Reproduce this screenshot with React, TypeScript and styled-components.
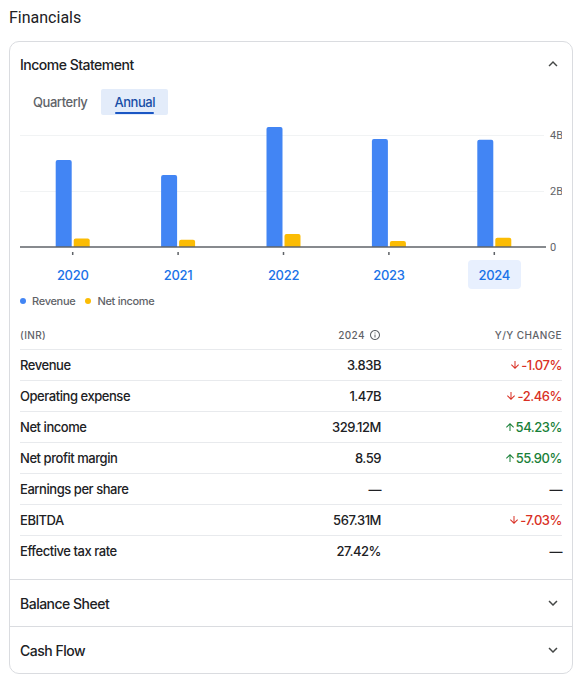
import React from "react";
import styled, { createGlobalStyle } from "styled-components";

const GlobalStyle = createGlobalStyle`
  body {
    margin: 0;
    background: #fff;
    color: #202124;
    font-family: Roboto, "Noto Sans", Arial, sans-serif;
  }
`;

// medium weight text: Inter carries a real 500 face
const MEDIUM = `Inter, Roboto, Arial, sans-serif`;

const Page = styled.div`
  padding: 8px 5px 0 9px;
`;

const Title = styled.h2`
  margin: 0;
  font-size: 16px;
  line-height: 20px;
  font-weight: 400;
  color: #202124;
`;

const Card = styled.section`
  margin-top: 13px;
  width: 564px;
  box-sizing: border-box;
  border: 1px solid #dadce0;
  border-radius: 10px;
  overflow: hidden;
`;

const Section = styled.div<{ $divided?: boolean }>`
  padding: 0 10px;
  border-top: ${({ $divided }) => ($divided ? "1px solid #dadce0" : "none")};
`;

const SectionHeader = styled.div<{ $height: number }>`
  height: ${({ $height }) => $height}px;
  display: flex;
  align-items: center;
  justify-content: space-between;
  font-family: ${MEDIUM};
  font-size: 14px;
  font-weight: 500;
  letter-spacing: -0.5px;
  color: #202124;
`;

const Chevron = styled.svg`
  width: 18px;
  height: 18px;
  fill: #444746;
`;

const Tabs = styled.div`
  margin-top: 3px;
  display: flex;
  gap: 1px;
`;

const Tab = styled.button<{ $active?: boolean }>`
  position: relative;
  height: 26px;
  padding: 0 13px;
  border: none;
  border-radius: 2px;
  background: ${({ $active }) => ($active ? "#e3ecfa" : "transparent")};
  color: ${({ $active }) => ($active ? "#174ea6" : "#5f6368")};
  font-family: ${MEDIUM};
  font-size: 13px;
  font-weight: 500;
  letter-spacing: -0.45px;
  cursor: pointer;

  &::after {
    content: "";
    display: ${({ $active }) => ($active ? "block" : "none")};
    position: absolute;
    left: 14px;
    right: 14px;
    bottom: 1px;
    height: 2px;
    background: #1a56c4;
    border-radius: 1px;
  }
`;

const ChartSvg = styled.svg`
  display: block;
  margin-top: 5px;
  font-family: Roboto, Arial, sans-serif;
`;

const Years = styled.div`
  margin-top: 3px;
  width: 527px;
  display: flex;
`;

const YearCell = styled.div`
  flex: 1;
  display: flex;
  justify-content: center;
`;

const YearButton = styled.button<{ $active?: boolean }>`
  width: 53px;
  height: 29px;
  border: none;
  border-radius: 4px;
  background: ${({ $active }) => ($active ? "#e8f0fe" : "transparent")};
  color: #1a73e8;
  font-family: ${MEDIUM};
  font-size: 13px;
  font-weight: 500;
  letter-spacing: -0.3px;
  padding: 0;
`;

const Legend = styled.div`
  margin-top: 5px;
  height: 14px;
  display: flex;
  align-items: center;
  gap: 10px;
  font-family: ${MEDIUM};
  font-size: 11px;
  font-weight: 500;
  letter-spacing: -0.3px;
  color: #5f6368;
`;

const LegendItem = styled.span`
  display: inline-flex;
  align-items: center;
  gap: 6px;
`;

const Dot = styled.span<{ $color: string }>`
  width: 6px;
  height: 6px;
  border-radius: 50%;
  background: ${({ $color }) => $color};
`;

const Table = styled.div`
  margin-top: 13px;
  padding-bottom: 13px;
`;

const Row = styled.div<{ $head?: boolean }>`
  display: grid;
  grid-template-columns: 1fr 120px 181px;
  align-items: center;
  height: ${({ $head }) => ($head ? "28px" : "30px")};
  border-top: ${({ $head }) => ($head ? "none" : "1px solid #e8eaed")};
  font-family: ${MEDIUM};
  font-size: ${({ $head }) => ($head ? "10px" : "13px")};
  font-weight: 500;
  letter-spacing: ${({ $head }) => ($head ? "0.4px" : "-0.45px")};
  color: ${({ $head }) => ($head ? "#5f6368" : "#202124")};
`;

const Num = styled.div`
  display: flex;
  justify-content: flex-end;
  align-items: center;
  gap: 4px;
`;

const Change = styled.div<{ $tone: "up" | "down" | "none" }>`
  display: flex;
  justify-content: flex-end;
  align-items: center;
  color: ${({ $tone }) => ($tone === "up" ? "#188038" : $tone === "down" ? "#d93025" : "#202124")};
`;

const Arrow = styled.svg`
  width: 12px;
  height: 12px;
  fill: currentColor;
`;

const InfoIcon = styled.svg`
  width: 12px;
  height: 12px;
  fill: #5f6368;
`;

const years = ["2020", "2021", "2022", "2023", "2024"];
const revenue = [3.11, 2.57, 4.29, 3.86, 3.83];
const netIncome = [0.3, 0.26, 0.46, 0.21, 0.33];

const rows: { label: string; value: string; change: string; tone: "up" | "down" | "none" }[] = [
  { label: "Revenue", value: "3.83B", change: "-1.07%", tone: "down" },
  { label: "Operating expense", value: "1.47B", change: "-2.46%", tone: "down" },
  { label: "Net income", value: "329.12M", change: "54.23%", tone: "up" },
  { label: "Net profit margin", value: "8.59", change: "55.90%", tone: "up" },
  { label: "Earnings per share", value: "—", change: "—", tone: "none" },
  { label: "EBITDA", value: "567.31M", change: "-7.03%", tone: "down" },
  { label: "Effective tax rate", value: "27.42%", change: "—", tone: "none" },
];

const BASE = 127;
const PX_PER_B = 28;
const BAND = 105.4;

// bar with rounded top corners
const barPath = (x: number, w: number, h: number) => {
  const r = Math.min(2, h / 2);
  const top = BASE - h;
  return `M${x} ${BASE} V${top + r} Q${x} ${top} ${x + r} ${top} H${x + w - r} Q${x + w} ${top} ${x + w} ${top + r} V${BASE} Z`;
};

const Chart = () => (
  <ChartSvg width={542} height={137} viewBox="0 0 542 137">
    <line x1={0} x2={524} y1={15.5} y2={15.5} stroke="#f1f3f4" />
    <line x1={0} x2={524} y1={71.5} y2={71.5} stroke="#f1f3f4" />
    {years.map((y, i) => {
      const c = BAND * (i + 0.5);
      return (
        <g key={y}>
          <path d={barPath(c - 17, 16, revenue[i] * PX_PER_B)} fill="#4285f4" />
          <path d={barPath(c + 1, 16, netIncome[i] * PX_PER_B)} fill="#fbbc04" />
          <rect x={c - 0.75} y={132} width={1.5} height={3} fill="#5f6368" />
        </g>
      );
    })}
    <line x1={0} x2={526} y1={127} y2={127} stroke="#5f6368" strokeWidth={1.4} />
    <g fontSize={11} fill="#5f6368">
      <text x={530} y={19}>4B</text>
      <text x={530} y={75}>2B</text>
      <text x={530} y={131}>0</text>
    </g>
  </ChartSvg>
);

const ArrowDown = () => (
  <Arrow viewBox="0 0 24 24">
    <path d="M20 12l-1.41-1.41L13 16.17V4h-2v12.17l-5.58-5.59L4 12l8 8 8-8z" />
  </Arrow>
);

const ArrowUp = () => (
  <Arrow viewBox="0 0 24 24">
    <path d="M4 12l1.41 1.41L11 7.83V20h2V7.83l5.58 5.59L20 12l-8-8-8 8z" />
  </Arrow>
);

const ExpandLess = () => (
  <Chevron viewBox="0 0 24 24">
    <path d="M12 8l-6 6 1.41 1.41L12 10.83l4.59 4.58L18 14z" />
  </Chevron>
);

const ExpandMore = () => (
  <Chevron viewBox="0 0 24 24">
    <path d="M16.59 8.59L12 13.17 7.41 8.59 6 10l6 6 6-6z" />
  </Chevron>
);

export default function App() {
  return (
    <Page>
      <GlobalStyle />
      <Title>Financials</Title>
      <Card>
        <Section>
          <SectionHeader $height={44}>
            Income Statement
            <ExpandLess />
          </SectionHeader>
          <Tabs>
            <Tab>Quarterly</Tab>
            <Tab $active>Annual</Tab>
          </Tabs>
          <Chart />
          <Years>
            {years.map((y) => (
              <YearCell key={y}>
                <YearButton $active={y === "2024"}>{y}</YearButton>
              </YearCell>
            ))}
          </Years>
          <Legend>
            <LegendItem>
              <Dot $color="#4285f4" />
              Revenue
            </LegendItem>
            <LegendItem>
              <Dot $color="#fbbc04" />
              Net income
            </LegendItem>
          </Legend>
          <Table>
            <Row $head>
              <div>(INR)</div>
              <Num>
                2024
                <InfoIcon viewBox="0 0 24 24">
                  <path d="M11 7h2v2h-2zm0 4h2v6h-2zm1-9C6.48 2 2 6.48 2 12s4.48 10 10 10 10-4.48 10-10S17.52 2 12 2zm0 18c-4.41 0-8-3.59-8-8s3.59-8 8-8 8 3.59 8 8-3.59 8-8 8z" />
                </InfoIcon>
              </Num>
              <Num>Y/Y CHANGE</Num>
            </Row>
            {rows.map((r) => (
              <Row key={r.label}>
                <div>{r.label}</div>
                <Num>{r.value}</Num>
                <Change $tone={r.tone}>
                  {r.tone === "down" && <ArrowDown />}
                  {r.tone === "up" && <ArrowUp />}
                  {r.change}
                </Change>
              </Row>
            ))}
          </Table>
        </Section>
        <Section $divided>
          <SectionHeader $height={46}>
            Balance Sheet
            <ExpandMore />
          </SectionHeader>
        </Section>
        <Section $divided>
          <SectionHeader $height={46}>
            Cash Flow
            <ExpandMore />
          </SectionHeader>
        </Section>
      </Card>
    </Page>
  );
}
